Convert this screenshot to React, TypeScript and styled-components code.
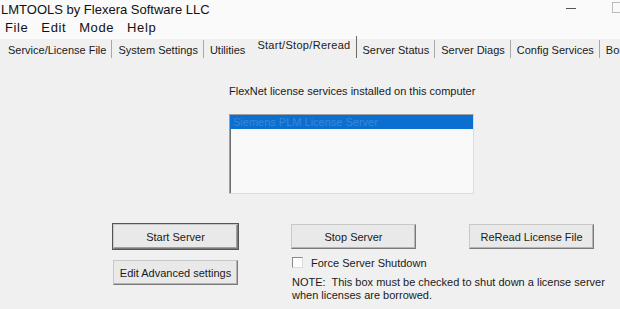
import React from 'react';
import styled, { createGlobalStyle } from 'styled-components';

const GlobalStyle = createGlobalStyle`
  html, body {
    margin: 0;
    padding: 0;
    background: #f0f0f0;
  }
  body {
    font-family: "Liberation Sans", Arial, sans-serif;
    color: #000;
  }
`;

const Window = styled.div`
  width: 620px;
  height: 309px;
  display: flex;
  flex-direction: column;
  overflow: hidden;
  background: #f0f0f0;
`;

const TitleBar = styled.div`
  height: 18px;
  display: flex;
  align-items: center;
  background: #fafafa;
  padding-left: 1px;
`;

const Title = styled.div`
  flex: 1;
  font-size: 13px;
  color: #111;
`;

const WinControls = styled.div`
  display: flex;
  align-items: center;
  gap: 36px;
`;

const MinGlyph = styled.div`
  width: 10px;
  height: 1px;
  background: #555;
  margin-top: -1px;
`;

const MaxGlyph = styled.div`
  width: 7px;
  height: 9px;
  border: 1px solid #bbb;
  border-right: none;
  margin-top: -3px;
`;

const MenuBar = styled.div`
  height: 19px;
  display: flex;
  align-items: center;
  gap: 13px;
  padding-left: 5px;
  background: #fafafa;
  font-size: 13px;
`;

const MenuItem = styled.span`
  color: #111;
  letter-spacing: 0.6px;
`;

const TabStrip = styled.div`
  height: 21px;
  display: flex;
  align-items: flex-end;
  padding-left: 8px;
  background: linear-gradient(#fafafa 0 2px, #f0f0f0 2px);
  font-size: 11px;
  white-space: nowrap;
`;

const Tab = styled.div<{ $active?: boolean; $edge: 'none' | 'light' | 'dark' }>`
  height: ${(p) => (p.$active ? 19 : 16)}px;
  display: flex;
  align-items: ${(p) => (p.$active ? 'flex-start' : 'center')};
  padding: ${(p) => (p.$active ? '3px 5px 0 6px' : '2px 5px 0 6px')};
  letter-spacing: ${(p) => (p.$active ? '0.3px' : '0')};
  border-right: ${(p) =>
    p.$edge === 'none' ? '1px solid transparent' : p.$edge === 'dark' ? '1px solid #6a6a6a' : '1px solid #a8a8a8'};
  color: #1a1a1a;
  &:first-child {
    padding-left: 0;
  }
`;

const Body = styled.div`
  flex: 1;
  display: flex;
  flex-direction: column;
  padding-top: 26px;
`;

const ListSection = styled.div`
  padding-left: 229px;
  display: flex;
  flex-direction: column;
  gap: 16px;
`;

const Caption = styled.div`
  font-size: 11px;
  line-height: 14px;
  color: #1a1a1a;
`;

const ListBox = styled.div`
  width: 243px;
  height: 78px;
  background: #f9f9f9;
  border: 1px solid #a0a0a0;
  border-right-color: #dcdcdc;
  border-bottom-color: #dcdcdc;
  box-shadow: inset 1px 1px 0 #6d6d6d;
`;

const ListRow = styled.div<{ $selected?: boolean }>`
  height: 14px;
  line-height: 14px;
  padding-left: 3px;
  font-size: 11px;
  background: ${(p) => (p.$selected ? '#0a6fd1' : 'transparent')};
  color: ${(p) => (p.$selected ? '#3a88d6' : '#000')};
`;

const Controls = styled.div`
  margin-top: 30px;
  padding-left: 113px;
  display: grid;
  grid-template-columns: 125px 125px 125px;
  column-gap: 53px;
  align-items: start;
`;

const Button = styled.button<{ $default?: boolean }>`
  height: 25px;
  width: 125px;
  padding: 0;
  font-family: "Liberation Sans", Arial, sans-serif;
  font-size: 11px;
  color: #1a1a1a;
  background: #e9e9e9;
  border: 1px solid #c8c8c8;
  border-right-color: #7a7a7a;
  border-bottom-color: #7a7a7a;
  box-shadow: ${(p) =>
    p.$default ? '0 0 0 1px #555, inset -1px -1px 0 #a0a0a0' : 'inset -1px -1px 0 #b4b4b4'};
  outline: none;
`;

const LowerButton = styled(Button)`
  margin-top: 11px;
`;

const ShutdownBox = styled.div`
  grid-column: 2 / 4;
  margin-top: 8px;
  display: flex;
  flex-direction: column;
  padding-left: 1px;
`;

const CheckRow = styled.label`
  display: flex;
  align-items: center;
  gap: 8px;
  font-size: 11px;
  color: #1a1a1a;
  height: 11px;
`;

const CheckBox = styled.span`
  width: 9px;
  height: 9px;
  background: #fdfdfd;
  border: 1px solid #8a8a8a;
  border-right-color: #dcdcdc;
  border-bottom-color: #dcdcdc;
`;

const Note = styled.div`
  margin-top: 8px;
  font-size: 11px;
  line-height: 13px;
  color: #1a1a1a;
  white-space: nowrap;
`;

const ACTIVE = 'Start/Stop/Reread';

const tabs = [
  'Service/License File',
  'System Settings',
  'Utilities',
  ACTIVE,
  'Server Status',
  'Server Diags',
  'Config Services',
  'Borrowing',
];

const App: React.FC = () => {
  const activeIndex = tabs.indexOf(ACTIVE);
  return (
    <>
      <GlobalStyle />
      <Window>
        <TitleBar>
          <Title>LMTOOLS by Flexera Software LLC</Title>
          <WinControls>
            <MinGlyph />
            <MaxGlyph />
          </WinControls>
        </TitleBar>
        <MenuBar>
          <MenuItem>File</MenuItem>
          <MenuItem>Edit</MenuItem>
          <MenuItem>Mode</MenuItem>
          <MenuItem>Help</MenuItem>
        </MenuBar>
        <TabStrip>
          {tabs.map((t, i) => (
            <Tab
              key={t}
              $active={i === activeIndex}
              $edge={
                i === activeIndex - 1 || i === tabs.length - 1
                  ? 'none'
                  : i === activeIndex
                  ? 'dark'
                  : 'light'
              }
            >
              {t}
            </Tab>
          ))}
        </TabStrip>
        <Body>
          <ListSection>
            <Caption>FlexNet license services installed on this computer</Caption>
            <ListBox>
              <ListRow $selected>Siemens PLM License Server</ListRow>
            </ListBox>
          </ListSection>
          <Controls>
            <Button $default>Start Server</Button>
            <Button>Stop Server</Button>
            <Button>ReRead License File</Button>
            <LowerButton>Edit Advanced settings</LowerButton>
            <ShutdownBox>
              <CheckRow>
                <CheckBox />
                Force Server Shutdown
              </CheckRow>
              <Note>
                NOTE:&nbsp; This box must be checked to shut down a license server
                <br />
                when licenses are borrowed.
              </Note>
            </ShutdownBox>
          </Controls>
        </Body>
      </Window>
    </>
  );
};

export default App;
